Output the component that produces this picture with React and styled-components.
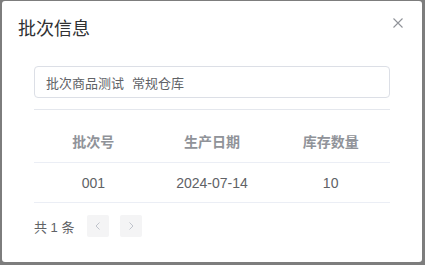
import React from "react";
import styled, { createGlobalStyle } from "styled-components";

const Global = createGlobalStyle`
  html, body {
    margin: 0;
    padding: 0;
    background: #7d7d7d;
    font-family: "Liberation Sans", "Noto Sans CJK SC", sans-serif;
  }
`;

const Dialog = styled.div`
  margin: 1px 0 0 2px;
  width: 420px;
  height: 261px;
  background: #fff;
  border-radius: 3px;
  box-sizing: border-box;
  display: flex;
  flex-direction: column;
`;

const Header = styled.div`
  display: flex;
  justify-content: space-between;
  align-items: flex-start;
  padding: 16px 18px 0 16px;
  height: 48px;
  box-sizing: border-box;
`;

const Title = styled.h2`
  margin: 0;
  font-size: 18px;
  line-height: 24px;
  font-weight: 400;
  color: #303133;
`;

const Close = styled.button`
  border: 0;
  background: none;
  padding: 0;
  width: 12px;
  height: 12px;
  cursor: pointer;
  display: flex;
`;

const Body = styled.div`
  padding: 17px 32px 0 32px;
`;

const Field = styled.div`
  height: 32px;
  border: 1px solid #dcdfe6;
  border-radius: 4px;
  box-sizing: border-box;
  display: flex;
  align-items: center;
  gap: 8px;
  padding: 0 11px;
  font-size: 13px;
  color: #606266;
  -webkit-text-fill-color: #606266;
  user-select: none;
`;

const Divider = styled.div`
  height: 1px;
  background: #e4e7ed;
  margin-top: 11px;
`;

const Table = styled.table`
  width: 100%;
  table-layout: fixed;
  border-collapse: collapse;
  margin-top: 10px;
  font-size: 14px;
  th, td {
    text-align: center;
    border-bottom: 1px solid #ebeef5;
    padding: 0;
  }
  th {
    height: 42px;
    color: #909399;
    font-weight: 700;
  }
  td {
    height: 39px;
    color: #606266;
  }
`;

const Pager = styled.div`
  display: flex;
  align-items: center;
  margin-top: 12px;
  gap: 11px;
  font-size: 13px;
  color: #606266;
`;

const PageBtn = styled.button`
  width: 22px;
  height: 22px;
  border: 0;
  border-radius: 2px;
  background: #f4f4f5;
  padding: 0;
  display: flex;
  align-items: center;
  justify-content: center;
  margin-left: ${(p) => p.$offset || 0}px;
`;

const Chevron = ({ dir }) => (
  <svg width="10" height="10" viewBox="0 0 10 10">
    <path
      d={dir === "left" ? "M6.5 1.5 L3 5 L6.5 8.5" : "M3.5 1.5 L7 5 L3.5 8.5"}
      fill="none"
      stroke="#c0c4cc"
      strokeWidth="1"
    />
  </svg>
);

export default function App() {
  return (
    <>
      <Global />
      <Dialog>
        <Header>
          <Title>批次信息</Title>
          <Close aria-label="close">
            <svg width="12" height="12" viewBox="0 0 12 12">
              <path d="M1.5 1.5 L10.5 10.5 M10.5 1.5 L1.5 10.5" stroke="#909399" strokeWidth="1.1" />
            </svg>
          </Close>
        </Header>
        <Body>
          <Field>
            <span>批次商品测试</span>
            <span>常规仓库</span>
          </Field>
          <Divider />
          <Table>
            <thead>
              <tr>
                <th>批次号</th>
                <th>生产日期</th>
                <th>库存数量</th>
              </tr>
            </thead>
            <tbody>
              <tr>
                <td>001</td>
                <td>2024-07-14</td>
                <td>10</td>
              </tr>
            </tbody>
          </Table>
          <Pager>
            <span>共 1 条</span>
            <PageBtn $offset={2}><Chevron dir="left" /></PageBtn>
            <PageBtn><Chevron dir="right" /></PageBtn>
          </Pager>
        </Body>
      </Dialog>
    </>
  );
}
